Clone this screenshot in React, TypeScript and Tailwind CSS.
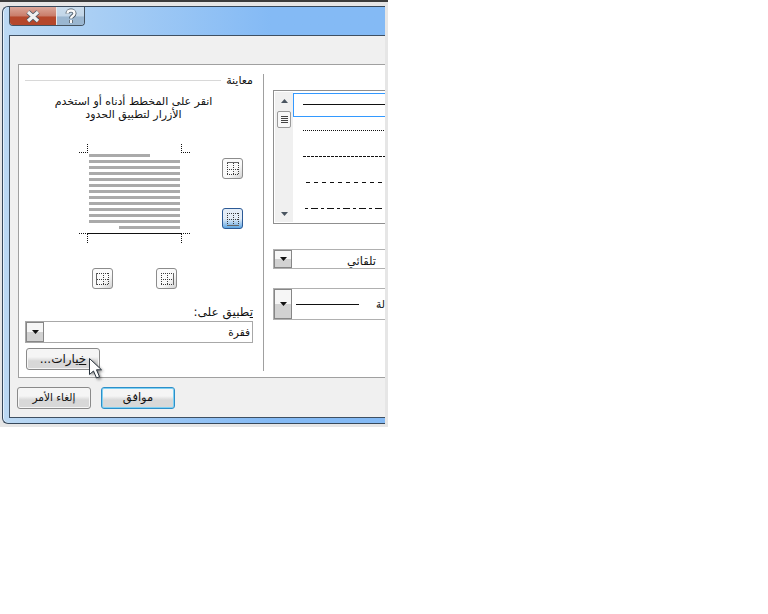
import React from "react";

const Arrow = ({ up = false, soft = false }: { up?: boolean; soft?: boolean }) => (
  <svg width="7" height="4" viewBox="0 0 7 4" className="block">
    <path d={up ? "M3.5 0 L7 4 L0 4 Z" : "M0 0 L7 0 L3.5 4 Z"} fill={soft ? "#4a5560" : "#111"} />
  </svg>
);

const ComboButton = () => (
  <div className="flex w-[18px] shrink-0 items-center justify-center self-stretch border-[1.5px] border-[#868686] bg-gradient-to-b from-[#f6f6f6] from-50% to-[#d2d2d2] to-50%">
    <Arrow />
  </div>
);

const BorderIcon = ({ side }: { side: "top" | "bottom" | "left" | "right" }) => {
  const solid = {
    top: "M3 2.5H15",
    bottom: "M3 15.5H15",
    left: "M2.5 3V15",
    right: "M15.5 3V15",
  }[side];
  return (
    <svg width="18" height="18" viewBox="0 0 18 18" className="block">
      <g stroke="#3a3a3a" strokeWidth="1" strokeDasharray="1 1" fill="none">
        {side !== "top" && <path d="M3 3.5H15" />}
        {side !== "bottom" && <path d="M3 14.5H15" />}
        {side !== "left" && <path d="M3.5 3V15" />}
        {side !== "right" && <path d="M14.5 3V15" />}
        <path d="M3 9.5H15M9.5 3V15" />
      </g>
      <path d={solid} stroke="#666" strokeWidth="1" />
    </svg>
  );
};

const IconButton = ({ side, active = false }: { side: "top" | "bottom" | "left" | "right"; active?: boolean }) => (
  <div
    className={
      active
        ? "flex h-[21px] w-[21px] items-center justify-center rounded-[3px] border-[1.5px] border-[#2c5a96] bg-gradient-to-b from-[#e4edf7] from-50% to-[#5ea6e2]"
        : "flex h-[21px] w-[21px] items-center justify-center rounded-[3px] border-[1.5px] border-[#8c8c8c] bg-gradient-to-br from-[#fafafa] from-60% to-[#d2d2d2]"
    }
  >
    <BorderIcon side={side} />
  </div>
);

const Btn = ({ children, blue = false, className = "" }: { children: React.ReactNode; blue?: boolean; className?: string }) => (
  <div
    className={
      "flex h-[22px] w-[74px] items-center justify-center rounded-[3px] border bg-gradient-to-b from-[#f5f5f5] from-40% to-[#d8d8d8] to-60% text-[#111] " +
      (blue ? "border-[#2c8fc9] shadow-[inset_0_0_0_1px_#7fd0f2] " : "border-[#8a8a8a] shadow-[inset_0_0_0_1px_#f6f6f6] ") +
      className
    }
  >
    {children}
  </div>
);

const Preview = () => {
  const lines = [160, 166, 172, 178, 184, 190, 196, 202, 208, 214, 220];
  return (
    <svg width="112" height="100" viewBox="79 144 112 100" className="block">
      <rect x="89" y="154" width="61" height="3" fill="#aaa" />
      {lines.map((y) => (
        <rect key={y} x="89" y={y} width="91" height="3" fill="#aaa" />
      ))}
      <rect x="119" y="226" width="61" height="3" fill="#aaa" />
      <g stroke="#111" strokeWidth="1" strokeDasharray="1 1" fill="none">
        <path d="M79 152.5H88M87.5 144V152M181.5 144V152M181 152.5H190" />
        <path d="M79 233.5H88M87.5 234V244M181.5 234V244M181 233.5H190" />
      </g>
      <path d="M88 233.5H181" stroke="#111" strokeWidth="1" />
    </svg>
  );
};

const StyleLine = ({ dash, x1, x2 }: { dash?: string; x1: number; x2: number }) => (
  <svg width="90" height="1" viewBox="0 0 90 1" className="block">
    <path d={`M${x1} 0.5H${x2}`} stroke="#111" strokeWidth="1" strokeDasharray={dash} />
  </svg>
);

const Row = ({ children, selected = false }: { children: React.ReactNode; selected?: boolean }) => (
  <div
    className={
      selected
        ? "mt-[1px] h-[24px] w-[120px] border border-[#3399ff] pl-[9px] pt-[10px]"
        : "h-[26px] w-[120px] pl-[10px] pt-[13px]"
    }
  >
    {children}
  </div>
);

export default function App() {
  return (
    <div className="relative h-[614px] w-[768px] overflow-hidden bg-white font-['DejaVu_Sans',sans-serif]">
      <div className="flex h-[427px] w-[388px] flex-col bg-[#e6e6e6]">
        <div className="h-[2px] bg-[#3c3c3c]" />
        <div className="flex-1 pb-[3px] pl-[2px] pr-[3px] pt-[4px]">
          <div className="flex h-[418px] flex-col rounded-l-[6px] border-y border-l border-[#37485a] bg-gradient-to-r from-[#bcd9f3] to-[#84baf5] to-70% shadow-[inset_1px_0_0_#e4f1fc]">
            <div className="flex h-[28px] shrink-0 items-start pl-[6px]">
              <div className="flex h-[19px] overflow-hidden rounded-b-[4px] border-x border-b border-[#44525f]">
                <div className="flex w-[47px] items-center justify-center border-r border-[#e8e8e8] bg-gradient-to-b from-[#dba699] from-0% via-[#c97d6a] via-50% to-[#b5472b] to-55%">
                  <svg width="16" height="13" viewBox="0 0 16 13">
                    <path d="M3 2L13 11M13 2L3 11" stroke="#4a5866" strokeWidth="5" />
                    <path d="M3 2L13 11M13 2L3 11" stroke="#f0f0f0" strokeWidth="3.2" />
                  </svg>
                </div>
                <div className="flex w-[27px] items-center justify-center bg-gradient-to-b from-[#c9dcec] from-0% via-[#c2d6e8] via-50% to-[#9ab6d0] to-55%">
                  <svg width="12" height="16" viewBox="0 0 12 16">
                    <path d="M2.5 5.5C2.5 1.5 9.5 1.5 9.5 5.5C9.5 8 6 8 6 10.5M6 12V15" stroke="#46535f" strokeWidth="4" fill="none" />
                    <path d="M2.5 5.5C2.5 1.5 9.5 1.5 9.5 5.5C9.5 8 6 8 6 10.5M6 12V15" stroke="#fafafa" strokeWidth="2.4" fill="none" />
                  </svg>
                </div>
              </div>
            </div>
            <div className="ml-[6px] flex h-[383px] flex-col border-y border-l border-[#3f5062] bg-[#f0f0f0]">
              <div className="ml-[8px] mt-[28px] flex h-[314px] overflow-hidden border-y border-l border-[#a0a0a0] bg-white">
                <div className="mt-[9px] flex h-[297px] w-[245px] shrink-0 flex-col border-r border-[#a0a0a0] pl-[6px] pr-[10px]">
                  <div className="flex h-[13px] items-center gap-[5px]">
                    <div className="h-px flex-1 bg-[#d8d8d8]" />
                    <div dir="rtl" className="text-[11px] leading-[13px] text-[#111]">معاينة</div>
                  </div>
                  <div dir="rtl" className="mt-[8px] h-[27px] pr-[11px] text-center text-[11px] leading-[13px] text-[#111]">
                    انقر على المخطط أدناه أو استخدم
                    <br />
                    الأزرار لتطبيق الحدود
                  </div>
                  <div className="mt-[22px] flex h-[100px]">
                    <div className="ml-[54px]">
                      <Preview />
                    </div>
                    <div className="ml-[31px] mt-[14px] flex flex-col gap-[29px]">
                      <IconButton side="top" />
                      <IconButton side="bottom" active />
                    </div>
                  </div>
                  <div className="ml-[67px] mt-[24px] flex gap-[43px]">
                    <IconButton side="left" />
                    <IconButton side="right" />
                  </div>
                  <div dir="rtl" className="mt-[16px] h-[15px] text-[12px] leading-[15px] text-[#111]">
                    <span className="underline">ت</span>طبيق على:
                  </div>
                  <div className="mt-[1px] flex h-[22px] border border-[#a8a8a8]">
                    <ComboButton />
                    <div dir="rtl" className="flex-1 pr-[2px] text-[10.5px] leading-[20px] text-[#111]">فقرة</div>
                  </div>
                  <Btn className="ml-[1px] mt-[5px] text-[12px]">
                    <span dir="rtl">
                      <span className="underline">خ</span>يارات...
                    </span>
                  </Btn>
                </div>
                <div className="w-[121px] shrink-0 overflow-hidden pl-[9px]">
                  <div className="mt-[25px] flex h-[134px] w-[150px] border border-[#8f8f8f] p-[1px]">
                    <div className="flex w-[18px] shrink-0 flex-col items-center bg-[#f0f0f0]">
                      <div className="mt-[7px]">
                        <Arrow up soft />
                      </div>
                      <div className="mt-[8px] flex h-[17px] w-[14px] flex-col items-center justify-center gap-[1px] rounded-[2px] border border-[#9a9a9a] bg-[#f8f8f8]">
                        <div className="h-px w-[7px] bg-[#444]" />
                        <div className="h-px w-[7px] bg-[#444]" />
                        <div className="h-px w-[7px] bg-[#444]" />
                        <div className="h-px w-[7px] bg-[#444]" />
                      </div>
                      <div className="mt-[84px]">
                        <Arrow soft />
                      </div>
                    </div>
                    <div className="flex flex-col">
                      <Row selected>
                        <StyleLine x1={0} x2={90} />
                      </Row>
                      <Row>
                        <StyleLine x1={0} x2={90} dash="1 1" />
                      </Row>
                      <Row>
                        <StyleLine x1={0} x2={90} dash="3 1" />
                      </Row>
                      <Row>
                        <StyleLine x1={3} x2={79} dash="4 4" />
                      </Row>
                      <Row>
                        <StyleLine x1={2} x2={79} dash="3 3 7 3" />
                      </Row>
                    </div>
                  </div>
                  <div className="mt-[25px] flex h-[20px] w-[150px] border border-[#b0b0b0]">
                    <ComboButton />
                    <div dir="rtl" className="w-[84px] pt-[1px] text-[11.5px] leading-[20px] text-[#111]">تلقائي</div>
                  </div>
                  <div className="mt-[19px] flex h-[32px] w-[150px] items-center border border-[#b0b0b0]">
                    <ComboButton />
                    <div className="ml-[4px] h-px w-[63px] bg-[#111]" />
                    <div dir="rtl" className="ml-[17px] whitespace-nowrap text-[10.5px] leading-[14px] text-[#111]">لة</div>
                  </div>
                </div>
              </div>
              <div className="ml-[7px] mt-[9px] flex gap-[10px]">
                <Btn className="text-[10.5px]">
                  <span dir="rtl">إلغاء الأمر</span>
                </Btn>
                <Btn blue className="text-[11.5px]">
                  <span dir="rtl">موافق</span>
                </Btn>
              </div>
            </div>
          </div>
        </div>
      </div>
      <svg width="22" height="28" viewBox="0 0 22 28" className="absolute left-[88px] top-[357px]">
        <defs>
          <filter id="s" x="-30%" y="-30%" width="160%" height="160%">
            <feGaussianBlur stdDeviation="1.4" />
          </filter>
        </defs>
        <path d="M3 3V19L7 15.5L10 23L13.5 21.5L10.5 14.5H15.5Z" fill="#000" opacity="0.5" filter="url(#s)" />
        <path d="M1.5 1.5V17.5L5.5 14L8.5 21L11.5 19.7L8.5 12.8H13.5Z" fill="#fff" stroke="#26303a" strokeWidth="1" />
      </svg>
    </div>
  );
}
